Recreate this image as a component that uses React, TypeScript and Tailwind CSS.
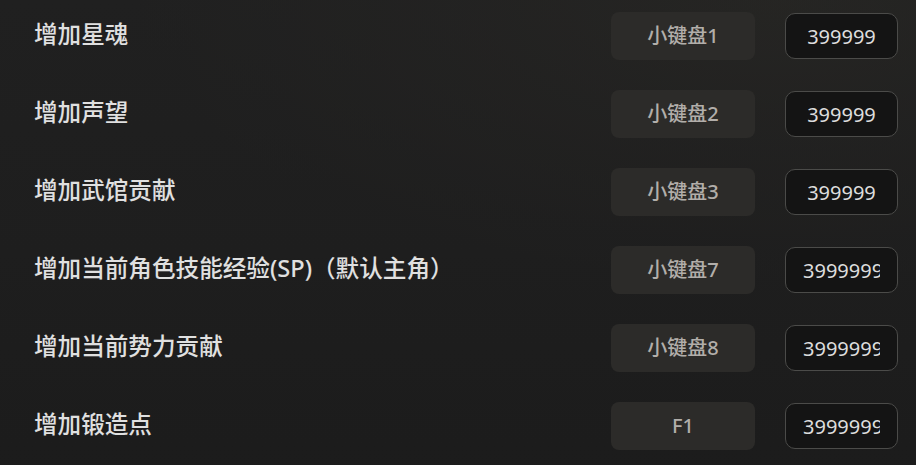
import React from 'react';

const rows = [
  { label: '增加星魂', key: '小键盘1', value: '399999' },
  { label: '增加声望', key: '小键盘2', value: '399999' },
  { label: '增加武馆贡献', key: '小键盘3', value: '399999' },
  { label: '增加当前角色技能经验(SP)（默认主角）', key: '小键盘7', value: '3999999' },
  { label: '增加当前势力贡献', key: '小键盘8', value: '3999999' },
  { label: '增加锻造点', key: 'F1', value: '3999999' },
];

const App: React.FC = () => {
  return (
    <div
      className="relative w-[916px] h-[465px] overflow-hidden bg-[#1d1d1d]"
      style={{ fontFamily: '"Noto Sans", "Noto Sans CJK SC", sans-serif' }}
    >
      <div className="absolute inset-0 bg-[radial-gradient(ellipse_70%_60%_at_85%_0%,#2b2a25_0%,#242321_45%,transparent_100%)]" aria-hidden />
      <div className="absolute inset-0 bg-[linear-gradient(to_bottom,#222222_0%,#1f1f1f_50%,#1b1b1b_100%)] opacity-60" aria-hidden />

      <div className="relative flex flex-col gap-[30px] pt-[12px] pl-[34px] pr-[18px]">
        {rows.map((row) => (
          <div key={row.label} className="flex items-center h-12">
            <div className="flex-1 -mt-[3px] text-[23.6px] font-medium text-[#e0e0e0]">
              {row.label}
            </div>
            <button
              type="button"
              className="w-[144px] h-12 rounded-[8px] bg-[#2c2b29] text-[20px] font-medium text-[#b2aeaa]"
            >
              {row.key}
            </button>
            <input
              readOnly
              value={row.value}
              className="ml-[30px] w-[113px] h-[46px] rounded-[10px] border border-[#4b4b49] bg-[#141414] px-[17px] text-center text-[20px] text-[#dddddd] outline-none"
            />
          </div>
        ))}
      </div>
    </div>
  );
};

export default App;
